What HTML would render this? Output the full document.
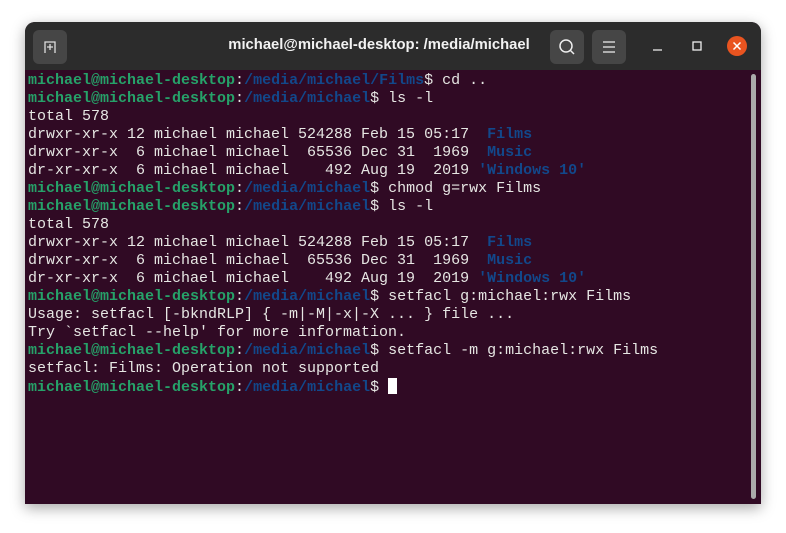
<!DOCTYPE html>
<html><head><meta charset="utf-8"><style>
body{margin:0;width:786px;height:533px;background:#fff;position:relative;overflow:hidden;font-family:"Liberation Sans",sans-serif}
.win{position:absolute;left:25px;top:22px;width:736px;height:482px;background:#300a24;border-radius:10px 10px 0 0;box-shadow:0 4px 14px rgba(0,0,0,.35);overflow:hidden}
.tb{position:absolute;left:0;top:0;right:0;height:48px;background:#2c2c2c}
.btn{position:absolute;top:8px;width:34px;height:34px;background:#464646;border-radius:6px}
.title{position:absolute;left:184px;width:340px;top:15px;text-align:center;color:#f2f2f2;font-weight:bold;font-size:14.8px}
pre{position:absolute;left:3px;top:50px;margin:0;font-family:"Liberation Mono",monospace;font-size:15px;line-height:18px;color:#e6e6e3;letter-spacing:0}
.g{color:#26a269;font-weight:bold}.b{color:#12488b;font-weight:bold}
.cur{display:inline-block;width:9px;height:16px;background:#fff;vertical-align:-3px}
.sb{position:absolute;left:726px;top:52px;width:5px;height:425px;background:#aaa;border-radius:3px}
</style></head><body>
<div class="win">
<div class="tb">
<div class="btn" style="left:8px"><svg width="34" height="34"><path d="M12 23V12h10v11M14 17h6M17 14v6" stroke="#ddd" stroke-width="1.3" fill="none"/></svg></div>
<div class="title">michael@michael-desktop: /media/michael</div>
<div class="btn" style="left:525px"><svg width="34" height="34"><circle cx="16" cy="16" r="6" stroke="#eee" stroke-width="1.5" fill="none"/><path d="M20 20l4 4" stroke="#eee" stroke-width="1.5"/></svg></div>
<div class="btn" style="left:567px"><svg width="34" height="34"><path d="M11 12h12M11 17h12M11 22h12" stroke="#eee" stroke-width="1.3"/></svg></div>
<svg style="position:absolute;left:620px;top:14px" width="110" height="22"><path d="M8 14h9" stroke="#eee" stroke-width="1.3"/><rect x="48" y="6" width="8" height="8" stroke="#eee" stroke-width="1.3" fill="none"/><circle cx="92" cy="10" r="10" fill="#e95420"/><path d="M88.5 6.5l7 7M95.5 6.5l-7 7" stroke="#fff" stroke-width="1.5"/></svg>
</div>
<pre><span class="g">michael@michael-desktop</span>:<span class="b">/media/michael/Films</span>$ cd ..
<span class="g">michael@michael-desktop</span>:<span class="b">/media/michael</span>$ ls -l
total 578
drwxr-xr-x 12 michael michael 524288 Feb 15 05:17  <span class="b">Films</span>
drwxr-xr-x  6 michael michael  65536 Dec 31  1969  <span class="b">Music</span>
dr-xr-xr-x  6 michael michael    492 Aug 19  2019 <span class="b">'Windows 10'</span>
<span class="g">michael@michael-desktop</span>:<span class="b">/media/michael</span>$ chmod g=rwx Films
<span class="g">michael@michael-desktop</span>:<span class="b">/media/michael</span>$ ls -l
total 578
drwxr-xr-x 12 michael michael 524288 Feb 15 05:17  <span class="b">Films</span>
drwxr-xr-x  6 michael michael  65536 Dec 31  1969  <span class="b">Music</span>
dr-xr-xr-x  6 michael michael    492 Aug 19  2019 <span class="b">'Windows 10'</span>
<span class="g">michael@michael-desktop</span>:<span class="b">/media/michael</span>$ setfacl g:michael:rwx Films
Usage: setfacl [-bkndRLP] { -m|-M|-x|-X ... } file ...
Try `setfacl --help' for more information.
<span class="g">michael@michael-desktop</span>:<span class="b">/media/michael</span>$ setfacl -m g:michael:rwx Films
setfacl: Films: Operation not supported
<span class="g">michael@michael-desktop</span>:<span class="b">/media/michael</span>$ <span class="cur"></span></pre>
<div class="sb"></div>
</div>
</body></html>
